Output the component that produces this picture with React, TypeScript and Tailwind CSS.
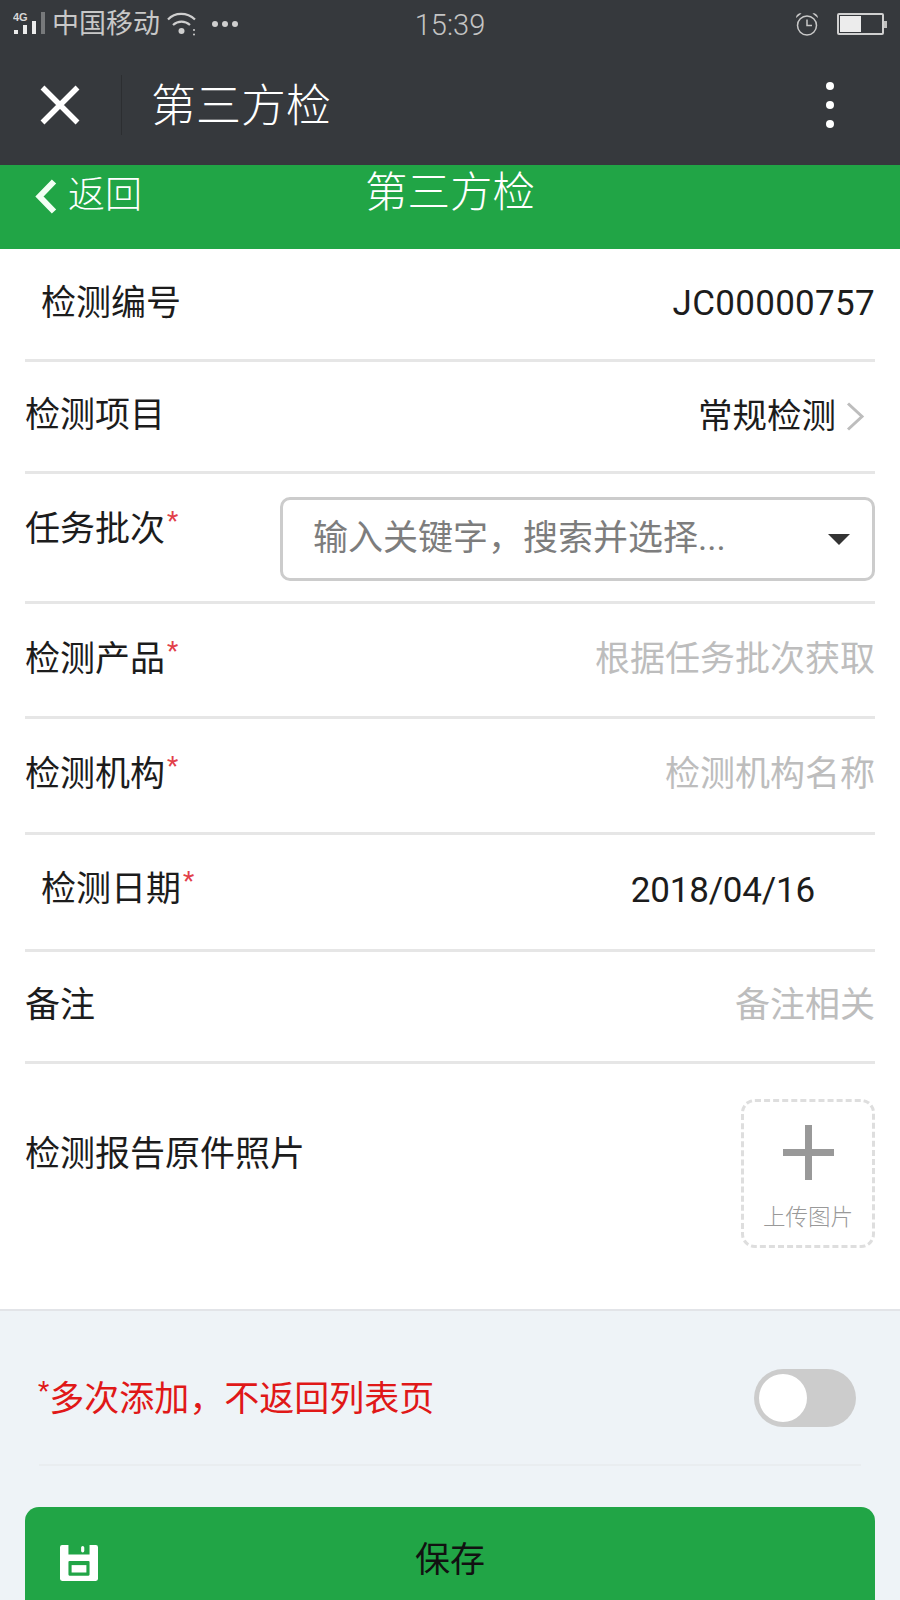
const FONT = "font-['Roboto','Noto_Sans_CJK_SC',sans-serif]";

function Star() {
  return <span className="ml-[2px] inline-block text-[#e2404a] text-[26px] leading-none align-[11px]">*</span>;
}

function SignalIcon() {
  return (
    <svg className="w-[33px] h-[24px] shrink-0" viewBox="0 0 33 24" aria-hidden="true">
      <text x="0" y="8.5" fontSize="11" fontWeight="700" fontFamily="Liberation Sans" fill="#d8d8d8">4G</text>
      <rect x="1" y="18" width="4" height="4" fill="#ececec" />
      <rect x="10" y="13" width="4" height="9" fill="#ececec" />
      <rect x="19" y="9" width="4" height="13" fill="#ececec" />
      <rect x="28" y="0" width="4" height="22" fill="#77797b" />
    </svg>
  );
}

function WifiIcon() {
  return (
    <svg className="w-[30px] h-[24px]" viewBox="0 0 30 24" fill="none" stroke="#cfcfcf" strokeWidth="2.2" aria-hidden="true">
      <path d="M1 7.500C8 0 20 0 28 7.500" />
      <path d="M6 13c5-4.500 12-4.500 17 0" />
      <circle cx="14.500" cy="19" r="3" fill="#cfcfcf" stroke="none" />
      <circle cx="27" cy="18" r="1" fill="#cfcfcf" stroke="none" />
      <circle cx="27" cy="22.500" r="1" fill="#cfcfcf" stroke="none" />
    </svg>
  );
}

function AlarmIcon() {
  return (
    <svg className="w-[24px] h-[24px]" viewBox="0 0 24 24" fill="none" stroke="#c8c8c8" strokeWidth="1.5" aria-hidden="true">
      <circle cx="12" cy="13.500" r="9.500" />
      <path d="M12 7.500v6h5" />
      <path d="M1 6c0-3 3-5.500 5.500-4.500zM23 6c0-3-3-5.500-5.500-4.500z" fill="#c8c8c8" stroke="none" />
    </svg>
  );
}

function CloseIcon() {
  return (
    <svg className="w-[40px] h-[40px] shrink-0" viewBox="0 0 40 40" fill="none" stroke="#fff" strokeWidth="5.500" aria-hidden="true">
      <path d="M2.500 2.500l35 35M37.500 2.500l-35 35" />
    </svg>
  );
}

function BackIcon() {
  return (
    <svg className="w-[22px] h-[35px] shrink-0" viewBox="0 0 22 35" fill="none" stroke="#f2fff4" strokeWidth="6" aria-hidden="true">
      <path d="M19 2.500L4.500 17.500 19 32.500" />
    </svg>
  );
}

function DisclosureIcon() {
  return (
    <svg className="w-[19px] h-[29px] ml-[10px] mr-[10px] shrink-0" viewBox="0 0 19 29" fill="none" stroke="#bdbdbd" strokeWidth="3" aria-hidden="true">
      <path d="M2 1.500L16 14.500 2 27.500" />
    </svg>
  );
}

function PlusIcon() {
  return (
    <svg className="w-[51px] h-[55px] shrink-0" viewBox="0 0 51 55" fill="#999" aria-hidden="true">
      <rect x="22" y="0" width="7" height="55" />
      <rect x="0" y="24" width="51" height="7" />
    </svg>
  );
}

function SaveIcon() {
  return (
    <svg className="w-[38px] h-[36px]" viewBox="0 0 36 34" aria-hidden="true">
      <path fill="#fff" fillRule="evenodd" d="M2 0h6v9h20V0h6a2 2 0 0 1 2 2v30a2 2 0 0 1-2 2H2a2 2 0 0 1-2-2V2a2 2 0 0 1 2-2zM8 16v12a1 1 0 0 0 1 1h18a1 1 0 0 0 1-1V16a1 1 0 0 0-1-1H9a1 1 0 0 0-1 1z" />
      <rect x="11" y="19" width="14" height="7" fill="#fff" />
      <rect x="20" y="1" width="3" height="6" rx="1.500" fill="#fff" />
    </svg>
  );
}

function Row({ height, children, className = '' }: { height: string; children: React.ReactNode; className?: string }) {
  return <div className={`${height} mx-[25px] border-b-[3px] border-[#e6e6e6] flex justify-between text-[35px] ${className}`}>{children}</div>;
}

export default function App() {
  return (
    <div className={`w-[900px] h-[1600px] overflow-hidden bg-[#eef3f7] ${FONT}`}>
      {/* System status bar and the in-app browser title */}
      <header className="h-[165px] bg-[#36393d]">
        <div className="h-[48px] grid grid-cols-[1fr_auto_1fr] items-center pl-[13px] pr-[13px] text-[#c8c8c8]">
          <div className="flex items-center">
            <SignalIcon />
            <span className="ml-[6px] text-[27px] leading-none">中国移动</span>
            <span className="ml-[7px]"><WifiIcon /></span>
            <span className="ml-[15px] flex gap-[4px]">
              <span className="w-[6px] h-[6px] rounded-full bg-[#cfcfcf]" />
              <span className="w-[6px] h-[6px] rounded-full bg-[#cfcfcf]" />
              <span className="w-[6px] h-[6px] rounded-full bg-[#cfcfcf]" />
            </span>
          </div>
          <span className="pt-[2px] text-[29px] leading-[34px] font-light text-[#c4c4c4]">15:39</span>
          <div className="flex items-center justify-end">
            <AlarmIcon />
            <span className="ml-[18px] flex items-center">
              <span className="w-[47px] h-[22px] border-2 border-[#d0d0d0] rounded-[2px] p-[1px]">
                <span className="block w-[21px] h-full bg-[#ececec]" />
              </span>
              <span className="w-[3px] h-[7px] bg-[#c0c0c0]" />
            </span>
          </div>
        </div>
        <div className="h-[117px] flex items-center pb-[3px]">
          <span className="ml-[40px]"><CloseIcon /></span>
          <div className="ml-[41px] w-px h-[60px] bg-[#2c2e31]" />
          <h1 className="ml-[29px] pt-[3px] text-[45px] leading-none text-white font-light">第三方检</h1>
          <div className="ml-auto mr-[66px] flex flex-col gap-[11px]">
            <span className="w-[8px] h-[8px] rounded-full bg-white" />
            <span className="w-[8px] h-[8px] rounded-full bg-white" />
            <span className="w-[8px] h-[8px] rounded-full bg-white" />
          </div>
        </div>
      </header>

      {/* Page header */}
      <nav className="h-[84px] bg-[#21a546] grid grid-cols-[1fr_auto_1fr] items-start text-white">
        <div className="flex items-center pt-[9px] pl-[35px]">
          <BackIcon />
          <span className="ml-[11px] text-[37px] leading-[44px] font-light">返回</span>
        </div>
        <div className="pt-[3px] text-[42.5px] leading-[50px] font-light">第三方检</div>
      </nav>

      {/* Form rows */}
      <main className="bg-white h-[1062px] border-b-[2px] border-[#e2e4e8] text-[#1c1c1c]">
        <Row height="h-[113px]" className="items-center">
          <span className="ml-[16px]">检测编号</span>
          <span className="tracking-[0.3px]">JC00000757</span>
        </Row>
        <Row height="h-[112px]" className="items-center">
          <span>检测项目</span>
          <span className="flex items-center text-[34.5px]">
            常规检测
            <DisclosureIcon />
          </span>
        </Row>
        <Row height="h-[130px]" className="items-start pt-[19px]">
          <span className="leading-[50px] mt-[12px]">任务批次<Star /></span>
          <button type="button" className="w-[595px] h-[84px] mt-[4px] border-[3px] border-[#cccccc] rounded-[10px] flex items-center pl-[30px] pr-[22px] text-[#7d7d7d] text-[35px]">
            <span className="flex-1 text-left">输入关键字，搜索并选择...</span>
            <span className="w-0 h-0 border-x-[11px] border-x-transparent border-t-[11px] border-t-[#333]" />
          </button>
        </Row>
        <Row height="h-[115px]" className="items-center">
          <span>检测产品<Star /></span>
          <span className="text-[#bdbdbd]">根据任务批次获取</span>
        </Row>
        <Row height="h-[116px]" className="items-center">
          <span>检测机构<Star /></span>
          <span className="text-[#bdbdbd]">检测机构名称</span>
        </Row>
        <Row height="h-[117px]" className="items-center pb-[4px]">
          <span className="ml-[16px]">检测日期<Star /></span>
          <span className="mr-[60px] mt-[3px] tracking-[-0.2px]">2018/04/16</span>
        </Row>
        <Row height="h-[112px]" className="items-center">
          <span>备注</span>
          <span className="text-[#bdbdbd]">备注相关</span>
        </Row>
        <div className="mx-[25px] pt-[35px] flex justify-between items-start">
          <span className="text-[35px] mt-[30px]">检测报告原件照片</span>
          <div className="w-[134px] h-[149px] border-[3px] border-dashed border-[#dedede] rounded-[14px] flex flex-col items-center pt-[23px]">
            <PlusIcon />
            <span className="text-[22.5px] leading-[30px] mt-[22px] text-[#999] font-light">上传图片</span>
          </div>
        </div>
      </main>

      {/* Stay on page toggle */}
      <section className="mx-[39px] h-[155px] border-b-[2px] border-[#e9edf0] flex items-center justify-between pt-[20px]">
        <span className="-ml-[1px] mt-[5px] text-[35px] text-[#e01818]">
          <span className="inline-block text-[26px] leading-none align-[11px]">*</span>
          多次添加，不返回列表页
        </span>
        <div className="w-[102px] h-[58px] mr-[5px] rounded-full bg-[#cccccc] flex items-center pl-[5px]">
          <span className="w-[48px] h-[48px] rounded-full bg-white" />
        </div>
      </section>

      <button type="button" className="mx-[25px] mt-[41px] w-[850px] h-[130px] rounded-t-[14px] bg-[#21a546] grid grid-cols-[1fr_auto_1fr] items-start text-[35px] text-[#111]">
        <span className="pl-[35px] pt-[38px] flex"><SaveIcon /></span>
        <span className="pt-[28px]">保存</span>
      </button>
    </div>
  );
}
